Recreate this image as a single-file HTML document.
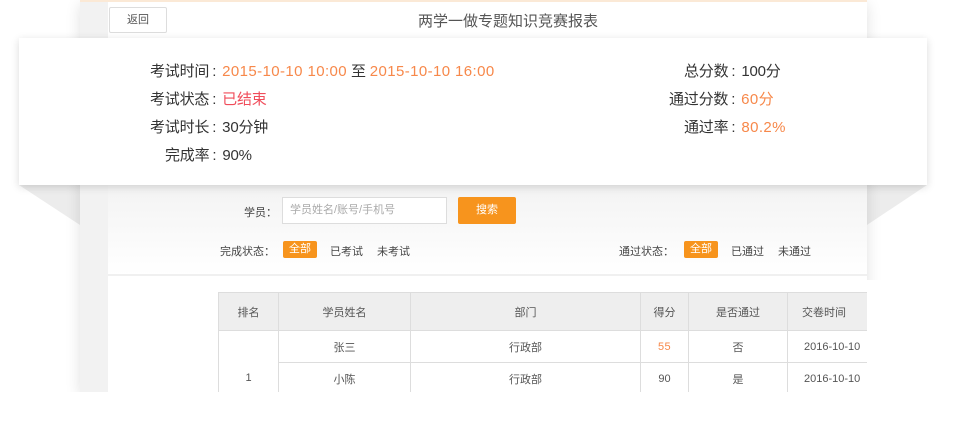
<!DOCTYPE html>
<html><head><meta charset="utf-8"><style>
*{margin:0;padding:0;box-sizing:border-box}
body{width:954px;height:434px;background:#fff;position:relative;overflow:hidden;font-family:"Liberation Sans","Noto Sans CJK SC",sans-serif;color:#444}
.bg{position:absolute;left:80px;top:0;width:787px;height:392px;background:#f2f2f2;box-shadow:0 4px 14px rgba(0,0,0,.12)}
.inner{position:absolute;left:108px;top:0;width:759px;height:392px;background:#fff}
.topline{position:absolute;left:80px;top:0;width:787px;height:2px;background:#fbe9d6}
.back{position:absolute;left:109px;top:7px;width:58px;height:26px;border:1px solid #ddd;border-radius:2px;font-size:11px;text-align:center;line-height:24px;color:#555;background:#fff}
.title{position:absolute;left:418px;top:10px;font-size:15px;color:#555}
.card{position:absolute;left:19px;top:38px;width:908px;height:147px;background:#fff;box-shadow:0 2px 8px rgba(0,0,0,.15)}
.t{position:absolute;font-size:15px;color:#333;white-space:nowrap;letter-spacing:-0.2px}
.t i{font-style:normal;margin:0 6px 0 3px}
.o{color:#f7884a;letter-spacing:0.4px}.r{color:#f04c5a}
.s{position:absolute;font-size:11px;color:#444;white-space:nowrap}
.btn{position:absolute;background:#f7941d;color:#fff;font-size:11px;text-align:center;border-radius:2px}
table{position:absolute;left:218px;top:292px;border-collapse:collapse;font-size:11px;color:#555;background:#fff}
td{border:1px solid #ddd;text-align:center}
thead td{background:#eee;height:38px}
tbody td{height:32px}
</style></head><body>
<div style="position:absolute;left:19px;top:185px;width:0;height:0;border-left:61px solid transparent;border-top:40px solid #ececec"></div>
<div style="position:absolute;left:867px;top:185px;width:0;height:0;border-right:60px solid transparent;border-top:40px solid #ececec"></div>
<div class="bg"></div>
<div class="inner"></div>
<div class="topline"></div>
<div class="back">返回</div>
<div class="title">两学一做专题知识竞赛报表</div>
<div style="position:absolute;left:108px;top:185px;width:759px;height:90px;background:linear-gradient(#f3f3f3,#fff)"></div>
<div style="position:absolute;left:108px;top:274px;width:759px;height:2px;background:#f0f0f0"></div>
<div class="s" style="left:244px;top:204px">学员：</div>
<div style="position:absolute;left:282px;top:197px;width:165px;height:27px;border:1px solid #ddd;background:#fff;font-size:11px;color:#aaa;line-height:25px;padding-left:7px">学员姓名/账号/手机号</div>
<div class="btn" style="left:458px;top:197px;width:58px;height:27px;line-height:27px">搜索</div>
<div class="s" style="left:220px;top:243px">完成状态：</div>
<div class="btn" style="left:283px;top:241px;width:34px;height:17px;line-height:17px">全部</div>
<div class="s" style="left:330px;top:243px">已考试</div>
<div class="s" style="left:377px;top:243px">未考试</div>
<div class="s" style="left:619px;top:243px">通过状态：</div>
<div class="btn" style="left:684px;top:241px;width:34px;height:17px;line-height:17px">全部</div>
<div class="s" style="left:731px;top:243px">已通过</div>
<div class="s" style="left:778px;top:243px">未通过</div>
<table>
<thead><tr><td style="width:60px">排名</td><td style="width:132px">学员姓名</td><td style="width:230px">部门</td><td style="width:48px">得分</td><td style="width:99px">是否通过</td><td style="width:80px;border-right:none;text-align:left;padding-left:14px;white-space:nowrap">交卷时间</td></tr></thead>
<tbody><tr><td rowspan="2" style="vertical-align:bottom;padding-bottom:10px;height:64px">1</td><td>张三</td><td>行政部</td><td class="o">55</td><td>否</td><td style="text-align:left;padding-left:16px;white-space:nowrap;border-right:none">2016-10-10</td></tr>
<tr><td>小陈</td><td>行政部</td><td>90</td><td>是</td><td style="text-align:left;padding-left:16px;white-space:nowrap;border-right:none">2016-10-10</td></tr></tbody>
</table>
<div style="position:absolute;left:867px;top:280px;width:87px;height:120px;background:#fff"></div>
<div style="position:absolute;left:0;top:392px;width:954px;height:42px;background:#fff"></div>
<div class="card">
<div class="t" style="left:131px;top:22px">考试时间<i>:</i><span class="o">2015-10-10 10:00</span> 至 <span class="o">2015-10-10 16:00</span></div>
<div class="t" style="left:131px;top:50px">考试状态<i>:</i><span class="r">已结束</span></div>
<div class="t" style="left:131px;top:78px">考试时长<i>:</i>30分钟</div>
<div class="t" style="left:146px;top:106px">完成率<i>:</i>90%</div>
<div class="t" style="left:665px;top:22px">总分数<i>:</i>100分</div>
<div class="t" style="left:650px;top:50px">通过分数<i>:</i><span class="o">60分</span></div>
<div class="t" style="left:665px;top:78px">通过率<i>:</i><span class="o">80.2%</span></div>
</div>
</body></html>
